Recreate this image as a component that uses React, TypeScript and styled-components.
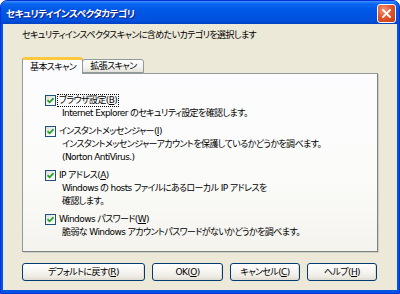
import React from 'react';
import styled, { createGlobalStyle } from 'styled-components';

const GlobalStyle = createGlobalStyle`
  html, body {
    margin: 0;
    padding: 0;
    background: #ffffff;
  }
  body {
    font-family: 'DejaVu Sans', 'Noto Sans CJK JP', sans-serif;
    font-size: 9px;
    letter-spacing: -0.6px;
    font-feature-settings: 'palt';
    color: #000000;
  }
`;

const Window = styled.div`
  width: 400px;
  height: 294px;
  display: flex;
  flex-direction: column;
  box-sizing: border-box;
  background: #0054e3;
  border: 1px solid #0831d9;
  border-radius: 7px 7px 0 0;
  overflow: hidden;
`;

const TitleBar = styled.div`
  height: 23px;
  flex-shrink: 0;
  display: flex;
  align-items: center;
  justify-content: space-between;
  padding: 0 3px 0 5px;
  background: linear-gradient(
    to bottom,
    #3d95ff 0%,
    #0a66f0 12%,
    #0058e6 40%,
    #0054e3 60%,
    #0050dc 85%,
    #0042c4 100%
  );
`;

const Title = styled.span`
  color: #ffffff;
  font-weight: bold;
  font-size: 9.5px;
  letter-spacing: -0.5px;
  text-shadow: 1px 1px 0 #0a1883;
`;

const CloseButton = styled.div`
  width: 17px;
  height: 17px;
  margin-top: 1px;
  display: flex;
  align-items: center;
  justify-content: center;
  border: 1px solid #ffffff;
  border-radius: 3px;
  background: radial-gradient(circle at 35% 30%, #f29a7c 0%, #e0582f 45%, #c43a12 100%);
`;

const Body = styled.div`
  flex: 1;
  display: flex;
  flex-direction: column;
  margin: 0 2px 4px 2px;
  padding: 5px 19px 9px 19px;
  background: #ece9d8;
`;

const Instruction = styled.div`
  line-height: 12px;
`;

const TabStrip = styled.div`
  display: flex;
  align-items: flex-end;
  height: 16px;
  margin-top: 16px;
  position: relative;
  z-index: 1;
`;

const Tab = styled.div<{ $active?: boolean }>`
  box-sizing: border-box;
  display: flex;
  align-items: center;
  justify-content: center;
  padding: 0 6px 0 7px;
  height: ${(p) => (p.$active ? '17px' : '14px')};
  margin-bottom: ${(p) => (p.$active ? '-1px' : '0')};
  border: 1px solid #919b9c;
  border-bottom: ${(p) => (p.$active ? 'none' : '1px solid #919b9c')};
  border-top: ${(p) => (p.$active ? '3px solid #ffc83c' : '1px solid #919b9c')};
  border-radius: 3px 3px 0 0;
  background: ${(p) =>
    p.$active ? '#fcfcfe' : 'linear-gradient(to bottom, #ffffff 0%, #f3f3ef 60%, #e3e1d8 100%)'};
  margin-left: ${(p) => (p.$active ? '0' : '-1px')};
  line-height: 12px;
`;

const Panel = styled.div`
  height: 179px;
  box-sizing: border-box;
  border: 1px solid #919b9c;
  border-right-color: #7c8485;
  border-bottom-color: #7c8485;
  box-shadow: 1px 1px 0 #d0cec4;
  background: linear-gradient(to bottom, #fcfcfe 0%, #fbfbf9 60%, #f4f3ee 100%);
  padding: 20px 10px 0 22px;
  display: flex;
  flex-direction: column;
  gap: 5px;
`;

const Item = styled.div`
  display: flex;
  flex-direction: column;
`;

const LabelRow = styled.div`
  display: flex;
  align-items: center;
  height: 13px;
`;

const Check = styled.div`
  width: 11px;
  height: 11px;
  box-sizing: border-box;
  border: 1px solid #1c5180;
  background: linear-gradient(135deg, #dcdcd6 0%, #f4f4f0 50%, #ffffff 100%);
  display: flex;
  align-items: center;
  justify-content: center;
  margin-right: 1px;
`;

const Label = styled.span<{ $focused?: boolean }>`
  line-height: 11px;
  padding: 0 1px;
  border: 1px ${(p) => (p.$focused ? 'dotted #000000' : 'solid transparent')};
`;

const Desc = styled.div`
  padding-left: 17px;
  line-height: 13px;
`;

const ButtonRow = styled.div`
  display: flex;
  gap: 7px;
  margin-top: 11px;
`;

const Button = styled.div<{ $w: number }>`
  width: ${(p) => p.$w}px;
  height: 18px;
  box-sizing: border-box;
  display: flex;
  align-items: center;
  justify-content: center;
  border: 1px solid #003c74;
  border-radius: 3px;
  background: linear-gradient(to bottom, #ffffff 0%, #f5f4ef 50%, #ebe9e0 85%, #d6d0c5 100%);
  box-shadow: inset -1px -1px 0 #e3dfd4;
  line-height: 12px;
`;

const CheckMark = () => (
  <svg width="7" height="7" viewBox="0 0 7 7">
    <path d="M0.5 3.2 L2.6 5.3 L6.5 1.2" fill="none" stroke="#21a121" strokeWidth="1.7" />
  </svg>
);

const CloseIcon = () => (
  <svg width="9" height="9" viewBox="0 0 9 9">
    <path d="M1 1 L8 8 M8 1 L1 8" stroke="#ffffff" strokeWidth="1.8" strokeLinecap="square" />
  </svg>
);

const items = [
  {
    label: 'ブラウザ設定',
    key: 'B',
    lines: ['Internet Explorer のセキュリティ設定を確認します。'],
  },
  {
    label: 'インスタントメッセンジャー',
    key: 'I',
    lines: [
      'インスタントメッセンジャーアカウントを保護しているかどうかを調べます。',
      '(Norton AntiVirus.)',
    ],
  },
  {
    label: 'IP アドレス',
    key: 'A',
    lines: ['Windows の hosts ファイルにあるローカル IP アドレスを', '確認します。'],
  },
  {
    label: 'Windows パスワード',
    key: 'W',
    lines: ['脆弱な Windows アカウントパスワードがないかどうかを調べます。'],
  },
];

const buttons = [
  { text: 'デフォルトに戻す', key: 'R', w: 123 },
  { text: 'OK', key: 'O', w: 71 },
  { text: 'キャンセル', key: 'C', w: 70 },
  { text: 'ヘルプ', key: 'H', w: 70 },
];

const App = () => {
  return (
    <>
      <GlobalStyle />
      <Window>
        <TitleBar>
          <Title>セキュリティインスペクタカテゴリ</Title>
          <CloseButton>
            <CloseIcon />
          </CloseButton>
        </TitleBar>
        <Body>
          <Instruction>セキュリティインスペクタスキャンに含めたいカテゴリを選択します</Instruction>
          <TabStrip>
            <Tab $active>基本スキャン</Tab>
            <Tab>拡張スキャン</Tab>
          </TabStrip>
          <Panel>
            {items.map((it, i) => (
              <Item key={it.key}>
                <LabelRow>
                  <Check>
                    <CheckMark />
                  </Check>
                  <Label $focused={i === 0}>
                    {it.label}(<u>{it.key}</u>)
                  </Label>
                </LabelRow>
                {it.lines.map((l) => (
                  <Desc key={l}>{l}</Desc>
                ))}
              </Item>
            ))}
          </Panel>
          <ButtonRow>
            {buttons.map((b) => (
              <Button key={b.key} $w={b.w}>
                {b.text}(<u>{b.key}</u>)
              </Button>
            ))}
          </ButtonRow>
        </Body>
      </Window>
    </>
  );
};

export default App;
